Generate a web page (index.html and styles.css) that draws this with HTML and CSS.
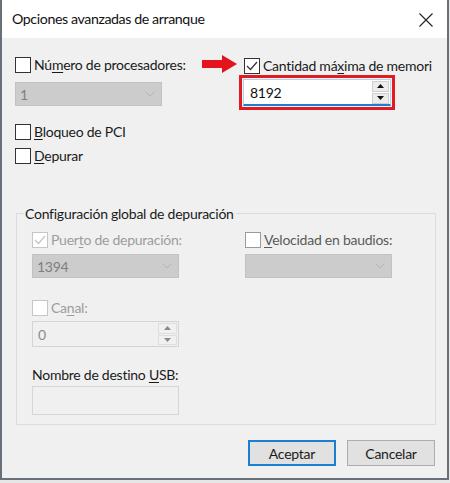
FILE: index.html
```html
<!DOCTYPE html>
<html lang="es">
<head>
<meta charset="utf-8">
<link rel="stylesheet" href="styles.css">
</head>
<body>
<div class="window">
  <div class="titlebar">
    <span class="title">Opciones avanzadas de arranque</span>
    <svg class="close" width="14" height="14" viewBox="0 0 14 14"><path d="M0.5 0.5 L13.5 13.5 M13.5 0.5 L0.5 13.5" stroke="#222" stroke-width="1.1" fill="none"/></svg>
  </div>
  <div class="content">
    <div class="cols">
      <div class="col">
        <div class="chk"><span class="box"></span><span class="lbl">Nú<u>m</u>ero de procesadores:</span></div>
        <div class="select disabled first"><span class="val">1</span><svg class="chev" width="10" height="6" viewBox="0 0 10 6"><path d="M0.5 0.5 L5 5 L9.5 0.5" stroke="#b4b4b4" fill="none"/></svg></div>
      </div>
      <div class="col right">
        <svg class="arrow" width="36" height="18" viewBox="0 0 36 18"><path d="M0 5 H20 V0 L35 9 L20 18 V13 H0 Z" fill="#e3141b"/></svg>
        <div class="chk"><span class="box"><svg width="14" height="14" viewBox="0 0 14 14"><path d="M2 7 L5.5 10.5 L12 3" stroke="#333" stroke-width="1.2" fill="none"/></svg></span><span class="lbl">Cantidad má<u>x</u>ima de memori</span></div>
        <div class="redbox">
          <div class="spinput focus">
            <span class="val dark">8192</span>
            <div class="spin">
              <span class="sb"><svg width="7" height="4" viewBox="0 0 7 4"><path d="M0 4 L3.5 0 L7 4 Z" fill="#111"/></svg></span>
              <span class="sb"><svg width="7" height="4" viewBox="0 0 7 4"><path d="M0 0 L3.5 4 L7 0 Z" fill="#111"/></svg></span>
            </div>
          </div>
        </div>
      </div>
    </div>
    <div class="chk pci"><span class="box"></span><span class="lbl"><u>B</u>loqueo de PCI</span></div>
    <div class="chk dep"><span class="box"></span><span class="lbl"><u>D</u>epurar</span></div>

    <div class="group">
      <div class="legend">Configuración global de depuración</div>
      <div class="gcols">
        <div class="col">
          <div class="chk off"><span class="box"><svg width="14" height="14" viewBox="0 0 14 14"><path d="M2 7 L5.5 10.5 L12 3" stroke="#c4c4c4" stroke-width="1.2" fill="none"/></svg></span><span class="lbl">Puer<u>t</u>o de depuración:</span></div>
          <div class="select disabled gsel"><span class="val">1394</span><svg class="chev" width="10" height="6" viewBox="0 0 10 6"><path d="M0.5 0.5 L5 5 L9.5 0.5" stroke="#b4b4b4" fill="none"/></svg></div>
        </div>
        <div class="col">
          <div class="chk mid"><span class="box"></span><span class="lbl"><u>V</u>elocidad en baudios:</span></div>
          <div class="select disabled gsel"><span class="val"></span><svg class="chev" width="10" height="6" viewBox="0 0 10 6"><path d="M0.5 0.5 L5 5 L9.5 0.5" stroke="#b4b4b4" fill="none"/></svg></div>
        </div>
      </div>
      <div class="chk off canal"><span class="box"></span><span class="lbl">Ca<u>n</u>al:</span></div>
      <div class="spinput disabled small">
        <span class="val">0</span>
        <div class="spin">
          <span class="sb"><svg width="7" height="4" viewBox="0 0 7 4"><path d="M0 4 L3.5 0 L7 4 Z" fill="#8a8a8a"/></svg></span>
          <span class="sb"><svg width="7" height="4" viewBox="0 0 7 4"><path d="M0 0 L3.5 4 L7 0 Z" fill="#8a8a8a"/></svg></span>
        </div>
      </div>
      <div class="usblabel">Nombre de destino <u>U</u>SB:</div>
      <div class="usbinput"></div>
    </div>

    <div class="buttons">
      <button class="btn default">Aceptar</button>
      <button class="btn">Cancelar</button>
    </div>
  </div>
</div>
</body>
</html>
```
FILE: styles.css
```css
html, body {
  margin: 0;
  padding: 0;
  background: #e6e6e6;
}
body {
  width: 450px;
  height: 483px;
  overflow: hidden;
  font-family: "Lato", "Noto Sans", sans-serif;
  font-size: 14px;
  letter-spacing: -0.25px;
  color: #1a1a1a;
}
.window {
  width: 445px;
  height: 478px;
  border: 2px solid #6a7078;
  border-top: 0;
  background: #f0f0f0;
  display: flex;
  flex-direction: column;
}
.titlebar {
  height: 38px;
  background: #fff;
  display: flex;
  align-items: center;
  justify-content: space-between;
  padding: 0 14px 0 10px;
}
.title {
  font-size: 14.2px;
  letter-spacing: -0.4px;
  color: #111;
  margin-top: -1px;
}
.close {
  margin-top: 1px;
}
.content {
  flex: 1;
  padding: 18px 12px 0 13px;
  display: flex;
  flex-direction: column;
}
.cols {
  display: grid;
  grid-template-columns: 229px 1fr;
}
.col {
  display: flex;
  flex-direction: column;
  position: relative;
}
.chk {
  display: flex;
  align-items: center;
  height: 17px;
  line-height: 17px;
  white-space: nowrap;
}
.box {
  width: 16px;
  height: 16px;
  box-sizing: border-box;
  border: 1px solid #333;
  background: #fff;
  margin-right: 3px;
  display: flex;
  align-items: center;
  justify-content: center;
  flex: none;
}
.chk.off .box {
  border-color: #c6c6c6;
}
.chk.off .lbl {
  color: #9c9c9c;
}
.chk.mid .box {
  border-color: #9a9a9a;
}
.chk.mid .lbl {
  color: #5a5a5a;
}
u {
  text-decoration-thickness: 1px;
  text-underline-offset: 2px;
}
.select {
  height: 24px;
  box-sizing: border-box;
  display: flex;
  align-items: center;
  justify-content: space-between;
  padding: 0 6px 0 4px;
}
.select.disabled {
  background: #cccccc;
  border: 1px solid #c2c2c2;
}
.select .val {
  color: #7e7e7e;
}
.select.first {
  width: 147px;
  margin-top: 9px;
}
.right .chk {
  margin-top: 1px;
}
.arrow {
  position: absolute;
  left: -42px;
  top: -1px;
}
.redbox {
  margin: 1px 0 0 -5px;
  width: 156px;
  height: 35px;
  box-sizing: border-box;
  border: 3px solid #e11b22;
  padding: 1px;
}
.spinput {
  height: 100%;
  box-sizing: border-box;
  display: flex;
  align-items: center;
  justify-content: space-between;
  background: #fff;
  border: 1px solid #7a7a7a;
  padding: 0 1px 0 6px;
}
.spinput.focus {
  border-color: #b9d1ea;
  border-bottom: 2px solid #1a7fd0;
}
.val.dark {
  color: #111;
}
.spin {
  display: flex;
  flex-direction: column;
  gap: 1px;
  height: 23px;
}
.sb {
  width: 17px;
  flex: 1;
  background: #ececec;
  border: 1px solid #cfcfcf;
  box-sizing: border-box;
  display: flex;
  align-items: center;
  justify-content: center;
}
.pci {
  margin-top: 13px;
}
.dep {
  margin-top: 7px;
}
.group {
  margin: 49px 0 0 1px;
  width: 420px;
  box-sizing: border-box;
  border: 1px solid #dcdcdc;
  padding: 0 0 9px 15px;
}
.legend {
  width: fit-content;
  margin: -9px 0 0 -8px;
  padding: 0 2px 0 1px;
  background: #f0f0f0;
  line-height: 17px;
  color: #1a1a1a;
}
.gcols {
  display: grid;
  grid-template-columns: 213px 1fr;
  margin-top: 9px;
}
.gsel {
  width: 147px;
  margin-top: 6px;
}
.canal {
  margin-top: 21px;
}
.spinput.disabled {
  background: #f0f0f0;
  border: 1px solid #d4d4d4;
  width: 147px;
  height: 26px;
  margin-top: 5px;
  padding-left: 5px;
}
.spinput.disabled .val {
  color: #8a8a8a;
}
.spinput.disabled .spin {
  height: 22px;
}
.spinput.disabled .sb {
  width: 19px;
  background: #f0f0f0;
  border-color: #dedede;
}
.usblabel {
  margin-top: 19px;
  line-height: 17px;
  color: #1a1a1a;
}
.usbinput {
  margin-top: 3px;
  width: 147px;
  height: 29px;
  box-sizing: border-box;
  border: 1px solid #d6d6d6;
  background: #f0f0f0;
}
.buttons {
  display: flex;
  justify-content: flex-end;
  gap: 11px;
  margin-top: 15px;
  padding-right: 0;
}
.btn {
  width: 88px;
  height: 26px;
  box-sizing: border-box;
  font-family: inherit;
  font-size: 14px;
  letter-spacing: -0.25px;
  color: #1a1a1a;
  background: #e1e1e1;
  border: 1px solid #adadad;
  padding: 0;
  margin: 0;
}
.btn.default {
  border: 2px solid #1a7fd0;
}
```
